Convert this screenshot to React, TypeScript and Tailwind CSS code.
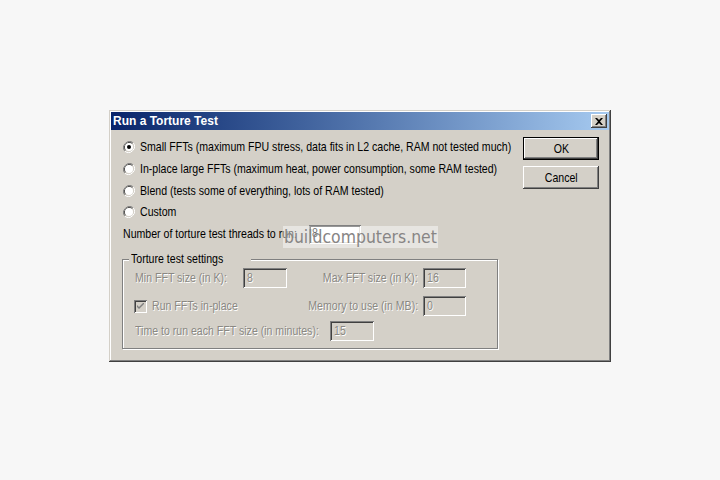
import React from "react";

const Radio = ({ checked }: { checked?: boolean }) => (
  <svg width="12" height="12" viewBox="0 0 12 12" className="shrink-0">
    <path d="M10.2 1.8 A6 6 0 0 0 1.8 10.2" fill="none" stroke="#808080" strokeWidth="1" />
    <path d="M1.8 10.2 A6 6 0 0 0 10.2 1.8" fill="none" stroke="#ffffff" strokeWidth="1" />
    <path d="M9.5 2.5 A5 5 0 0 0 2.5 9.5" fill="none" stroke="#404040" strokeWidth="1" />
    <path d="M2.5 9.5 A5 5 0 0 0 9.5 2.5" fill="none" stroke="#d4d0c8" strokeWidth="1" />
    <circle cx="6" cy="6" r="4" fill="#ffffff" />
    {checked && <circle cx="6" cy="6" r="2" fill="#000000" />}
  </svg>
);

const sunkenDisabled =
  "bg-[#d4d0c8] shadow-[inset_1px_1px_#808080,inset_-1px_-1px_#ffffff,inset_2px_2px_#404040,inset_-2px_-2px_#d4d0c8]";
const sunkenWhite =
  "bg-white shadow-[inset_1px_1px_#808080,inset_-1px_-1px_#ffffff,inset_2px_2px_#404040,inset_-2px_-2px_#d4d0c8]";
const raised =
  "bg-[#d4d0c8] shadow-[inset_-1px_-1px_#404040,inset_1px_1px_#ffffff,inset_-2px_-2px_#808080,inset_2px_2px_#d4d0c8]";

const dis = "text-[#8a8883] [text-shadow:1px_1px_0_#ffffff]";

const T = ({ children, right, className = "" }: { children: React.ReactNode; right?: boolean; className?: string }) => (
  <span className={`inline-block shrink-0 scale-x-[0.813] ${right ? "origin-right" : "origin-left"} ${className}`}>{children}</span>
);

const DisInput = ({ value, w }: { value: string; w: string }) => (
  <div className={`${sunkenDisabled} ${w} h-[20px] shrink-0 flex items-center pl-[4px] ${dis}`}>
    <T>{value}</T>
  </div>
);

export default function App() {
  return (
    <div className="w-[720px] h-[480px] bg-[#f7f7f7] pt-[110px] pl-[109px] font-['Liberation_Sans',Arial,sans-serif] text-[13px] text-black whitespace-nowrap">
      <div className="w-[502px] h-[252px] bg-[#d4d0c8] p-[2px] shadow-[inset_-1px_-1px_#404040,inset_1px_1px_#d4d0c8,inset_-2px_-2px_#808080,inset_2px_2px_#ffffff] flex flex-col">
        {/* Title bar */}
        <div className="h-[18px] bg-gradient-to-r from-[#0a246a] to-[#a6caf0] flex items-center justify-between pl-[2px] pr-[2px]">
          <span className="text-white font-bold text-[12px] leading-none">Run a Torture Test</span>
          <div className={`${raised} w-[16px] h-[14px] flex items-center justify-center`}>
            <svg width="8" height="7" viewBox="0 0 8 7">
              <path d="M0 0 L2 0 L4 2 L6 0 L8 0 L5 3.5 L8 7 L6 7 L4 5 L2 7 L0 7 L3 3.5 Z" fill="#000" />
            </svg>
          </div>
        </div>
        {/* Body */}
        <div className="flex flex-1 relative">
          <div className="flex-1 min-w-0 pl-[11px] pt-[6px]">
            <div className="h-[22px] flex items-center pl-[1px]">
              <Radio checked />
              <T className="ml-[5px]">Small FFTs (maximum FPU stress, data fits in L2 cache, RAM not tested much)</T>
            </div>
            <div className="h-[22px] flex items-center pl-[1px]">
              <Radio />
              <T className="ml-[5px]">In-place large FFTs (maximum heat, power consumption, some RAM tested)</T>
            </div>
            <div className="h-[21px] flex items-center pl-[1px]">
              <Radio />
              <T className="ml-[5px]">Blend (tests some of everything, lots of RAM tested)</T>
            </div>
            <div className="h-[21px] flex items-center pl-[1px]">
              <Radio />
              <T className="ml-[5px]">Custom</T>
            </div>
            <div className="h-[22px] mt-[1px] flex items-center pl-[1px]">
              <div className="w-[186px] shrink-0 flex">
                <T>Number of torture test threads to run:</T>
              </div>
              <div className={`${sunkenWhite} w-[52px] h-[19px] shrink-0 flex items-start pl-[3px] pt-[1px] leading-[14px]`}>
                <T>8</T>
              </div>
            </div>
            {/* Group box */}
            <div className="relative mt-[14px] w-[376px] h-[90px] border border-[#808080] shadow-[inset_1px_1px_#ffffff,1px_1px_#ffffff] pt-[8px] pl-[12px]">
              <div className="absolute left-[6px] top-[-8px] w-[122px] px-[2px] bg-[#d4d0c8] leading-[14px] flex">
                <T>Torture test settings</T>
              </div>
              <div className="flex items-center h-[20px]">
                <div className={`w-[108px] shrink-0 flex ${dis}`}>
                  <T>Min FFT size (in K):</T>
                </div>
                <DisInput value="8" w="w-[44px]" />
                <div className={`w-[131px] shrink-0 flex justify-end ${dis}`}>
                  <T right>Max FFT size (in K):</T>
                </div>
                <div className="w-[5px] shrink-0" />
                <DisInput value="16" w="w-[43px]" />
              </div>
              <div className="flex items-center h-[20px] mt-[8px]">
                <div className={`${sunkenDisabled} w-[13px] h-[13px] -ml-[1px] shrink-0 flex items-center justify-center`}>
                  <svg width="7" height="7" viewBox="0 0 7 7">
                    <path d="M0 2 L0 4 L2 6 L7 1 L7 -1 L2 4 Z" fill="#808080" />
                  </svg>
                </div>
                <div className={`ml-[5px] w-[90px] shrink-0 flex ${dis}`}>
                  <T>Run FFTs in-place</T>
                </div>
                <div className={`w-[176px] shrink-0 flex justify-end ${dis}`}>
                  <T right>Memory to use (in MB):</T>
                </div>
                <div className="w-[5px] shrink-0" />
                <DisInput value="0" w="w-[43px]" />
              </div>
              <div className="flex items-center h-[20px] mt-[5px]">
                <div className={`w-[195px] shrink-0 flex ${dis}`}>
                  <T>Time to run each FFT size (in minutes):</T>
                </div>
                <DisInput value="15" w="w-[44px]" />
              </div>
            </div>
          </div>
          {/* Buttons */}
          <div className="w-[86px] shrink-0 pr-[10px] pt-[7px] flex flex-col">
            <div className="border border-black">
              <div className={`${raised} h-[21px] flex items-center justify-center`}>
                <span className="inline-block scale-x-[0.813]">OK</span>
              </div>
            </div>
            <div className={`${raised} h-[23px] mt-[6px] flex items-center justify-center`}>
              <span className="inline-block scale-x-[0.813]">Cancel</span>
            </div>
          </div>
          {/* Watermark */}
          <div className="absolute left-[172px] top-[96px] w-[155px] h-[22px] bg-[rgba(255,255,255,0.45)] flex items-center pl-[1px]">
            <span className="inline-block origin-left scale-x-[0.87] font-['DejaVu_Sans',sans-serif] text-[18px] leading-none text-[#878585]">buildcomputers.net</span>
          </div>
        </div>
      </div>
    </div>
  );
}
